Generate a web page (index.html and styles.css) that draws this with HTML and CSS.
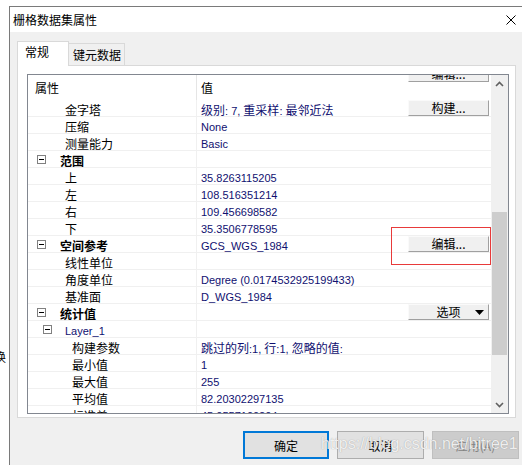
FILE: index.html
```html
<!DOCTYPE html>
<html>
<head>
<meta charset="utf-8">
<link rel="stylesheet" href="styles.css">
</head>
<body>
<div class="screen">
  <div class="behind"><span class="cut">换</span></div>
  <div class="dialog">
    <div class="titlebar">
      <span class="title">栅格数据集属性</span>
      <svg class="close" width="10" height="10" viewBox="0 0 10 10"><path d="M0.5 0.5 L9.5 9.5 M9.5 0.5 L0.5 9.5" stroke="#000" stroke-width="1" fill="none"/></svg>
    </div>
    <div class="body">
      <div class="tabs">
        <div class="tab active">常规</div>
        <div class="tab">键元数据</div>
      </div>
      <div class="panel">
        <div class="grid">
          <div class="rows">
            <div class="hdr"><div class="hc1">属性</div><div class="hc2">值</div></div>
            <div class="row"><div class="k l1">金字塔</div><div class="v"><span class="t"><span class="zh">级别</span>: 7, <span class="zh">重采样</span>: <span class="zh">最邻近法</span></span><span class="btn">构建...</span></div></div>
            <div class="row"><div class="k l1">压缩</div><div class="v"><span class="t">None</span></div></div>
            <div class="row"><div class="k l1">测量能力</div><div class="v"><span class="t">Basic</span></div></div>
            <div class="row"><div class="k cat"><span class="mb"></span>范围</div><div class="v"></div></div>
            <div class="row"><div class="k l1">上</div><div class="v"><span class="t">35.8263115205</span></div></div>
            <div class="row"><div class="k l1">左</div><div class="v"><span class="t">108.516351214</span></div></div>
            <div class="row"><div class="k l1">右</div><div class="v"><span class="t">109.456698582</span></div></div>
            <div class="row"><div class="k l1">下</div><div class="v"><span class="t">35.3506778595</span></div></div>
            <div class="row"><div class="k cat"><span class="mb"></span>空间参考</div><div class="v"><span class="t">GCS_WGS_1984</span><span class="btn">编辑...</span></div></div>
            <div class="row"><div class="k l1">线性单位</div><div class="v"></div></div>
            <div class="row"><div class="k l1">角度单位</div><div class="v"><span class="t">Degree (0.0174532925199433)</span></div></div>
            <div class="row"><div class="k l1">基准面</div><div class="v"><span class="t">D_WGS_1984</span></div></div>
            <div class="row"><div class="k cat"><span class="mb"></span>统计值</div><div class="v"><span class="btn dd"><span></span><span>选项</span><svg width="9" height="5" viewBox="0 0 9 5"><path d="M0 0 H9 L4.5 5 Z" fill="#000"/></svg></span></div></div>
            <div class="row"><div class="k sub"><span class="mb"></span><span class="lay">Layer_1</span></div><div class="v"></div></div>
            <div class="row"><div class="k l2">构建参数</div><div class="v"><span class="t"><span class="zh">跳过的列</span>:1, <span class="zh">行</span>:1, <span class="zh">忽略的值</span>:</span></div></div>
            <div class="row"><div class="k l2">最小值</div><div class="v"><span class="t">1</span></div></div>
            <div class="row"><div class="k l2">最大值</div><div class="v"><span class="t">255</span></div></div>
            <div class="row"><div class="k l2">平均值</div><div class="v"><span class="t">82.20302297135</span></div></div>
            <div class="row"><div class="k l2">标准差</div><div class="v"><span class="t">45.0557100204</span></div></div>
          </div>
          <div class="sb">
            <div class="arrow"><svg width="9" height="6" viewBox="0 0 9 6"><path d="M1 5 L4.5 1.5 L8 5" stroke="#606060" stroke-width="1.6" fill="none"/></svg></div>
            <div class="track"><div class="thumb"></div></div>
            <div class="arrow"><svg width="9" height="6" viewBox="0 0 9 6"><path d="M1 1 L4.5 4.5 L8 1" stroke="#606060" stroke-width="1.6" fill="none"/></svg></div>
          </div>
          <div class="clip"><span class="btn clipped">编辑...</span></div>
        </div>
      </div>
      <div class="actions">
        <div class="pb ok">确定</div>
        <div class="pb">取消</div>
        <div class="pb off">应用(A)</div>
      </div>
    </div>
  </div>
</div>
<div class="redbox"></div>
<div class="wm">https://blog.csdn.net/bitree1</div>
</body>
</html>
```

FILE: styles.css
```css
body {
  margin: 0;
  width: 522px;
  height: 465px;
  overflow: hidden;
  background: #fff;
  position: relative;
  font-family: "Noto Sans CJK SC", sans-serif;
  font-size: 12px;
  color: #000;
}
.screen {
  display: flex;
  padding-top: 6px;
  height: 465px;
  box-sizing: border-box;
}
.behind {
  width: 9px;
  overflow: hidden;
  padding-top: 343px;
}
.cut {
  display: block;
  margin-left: -6px;
  line-height: 16px;
}
.dialog {
  flex: 1;
  border-top: 1px solid #7a7a7a;
  border-left: 1px solid #7a7a7a;
  background: #f0f0f0;
  display: flex;
  flex-direction: column;
}
.titlebar {
  height: 25px;
  background: #fff;
  display: flex;
  align-items: center;
  padding-left: 3px;
}
.title { line-height: 16px; }
.close {
  margin-left: auto;
  margin-right: 6px;
}
.body {
  padding: 9px 0 0 7px;
}
.tabs {
  display: flex;
  align-items: flex-end;
  height: 24px;
}
.tab {
  box-sizing: border-box;
  border: 1px solid #d9d9d9;
  border-bottom: none;
  line-height: 16px;
}
.tab.active {
  width: 52px;
  height: 25px;
  background: #fff;
  margin-bottom: -1px;
  position: relative;
  z-index: 1;
  padding: 2px 0 0 7px;
}
.tab:not(.active) {
  width: 56px;
  height: 22px;
  border-left: none;
  padding: 3px 0 0 4px;
}
.panel {
  width: 499px;
  height: 353px;
  box-sizing: border-box;
  border: 1px solid #d9d9d9;
  background: #fff;
  padding: 8px 0 0 9px;
}
.grid {
  width: 482px;
  height: 340px;
  box-sizing: border-box;
  border: 1px solid #828790;
  display: flex;
  position: relative;
}
.rows {
  width: 463px;
  overflow: hidden;
}
.hdr {
  height: 25px;
  display: flex;
  line-height: 25px;
}
.hc1 {
  width: 169px;
  box-sizing: border-box;
  border-right: 1px solid #e5e5e5;
  padding-left: 7px;
}
.hc2 { padding-left: 4px; }
.row {
  height: 17px;
  box-sizing: border-box;
  border-bottom: 1px solid #f0f0f0;
  display: flex;
}
.k {
  width: 169px;
  flex: none;
  box-sizing: border-box;
  border-right: 1px solid #f0f0f0;
  padding-top: 2px;
  line-height: 16px;
  white-space: nowrap;
  display: flex;
  align-items: flex-start;
}
.l1 { padding-left: 37px; }
.l2 { padding-left: 44px; }
.cat { padding-left: 9px; font-weight: bold; }
.cat .mb { margin-right: 14px; }
.sub { padding-left: 15px; }
.sub .mb { margin-right: 13px; }
.mb {
  width: 9px;
  height: 9px;
  box-sizing: border-box;
  border: 1px solid #808080;
  margin-top: 2px;
  position: relative;
  flex: none;
  background: #fff;
}
.mb::after {
  content: "";
  position: absolute;
  left: 1px;
  top: 3px;
  width: 5px;
  height: 1px;
  background: #000;
}
.lay {
  font-family: "Liberation Sans", sans-serif;
  font-size: 11px;
  color: #101070;
  font-weight: normal;
}
.v {
  flex: 1;
  min-width: 0;
  display: flex;
  justify-content: space-between;
  align-items: flex-start;
  padding-left: 4px;
  font-family: "Liberation Sans", "Noto Sans CJK SC", sans-serif;
  font-size: 11px;
  color: #101070;
  white-space: nowrap;
}
.t {
  padding-top: 2px;
  line-height: 16px;
}
.zh {
  font-family: "Noto Sans CJK SC", sans-serif;
  font-size: 12px;
}
.btn {
  width: 81px;
  height: 16px;
  margin-left: auto;
  margin-right: 2px;
  box-sizing: border-box;
  background: #f0f0f0;
  border-top: 1px solid #fafafa;
  border-left: 1px solid #fafafa;
  border-right: 1px solid #a0a0a0;
  border-bottom: 1px solid #a0a0a0;
  font-family: "Noto Sans CJK SC", sans-serif;
  font-size: 12px;
  color: #000;
  line-height: 14px;
  text-align: center;
  flex: none;
}
.dd {
  display: grid;
  grid-template-columns: 1fr auto 1fr;
  align-items: center;
}
.dd svg {
  justify-self: end;
  margin-right: 4px;
}
.sb {
  width: 17px;
  background: #f0f0f0;
  display: flex;
  flex-direction: column;
}
.arrow {
  height: 17px;
  display: flex;
  align-items: center;
  justify-content: center;
}
.track {
  flex: 1;
  padding-top: 120px;
}
.thumb {
  width: 15px;
  height: 143px;
  margin-left: 1px;
  background: #cdcdcd;
}
.clip {
  position: absolute;
  left: 380px;
  top: 0;
  width: 81px;
  height: 7px;
  overflow: hidden;
}
.clipped {
  display: block;
  margin: -9px 0 0 0;
}
.actions {
  display: flex;
  justify-content: flex-end;
  gap: 8px;
  margin-top: 13px;
  padding-right: 3px;
}
.pb {
  width: 87px;
  height: 28px;
  box-sizing: border-box;
  background: #e1e1e1;
  border: 1px solid #adadad;
  display: flex;
  align-items: center;
  justify-content: center;
}
.pb.ok {
  width: 86px;
  border: 2px solid #0078d7;
}
.pb.off {
  background: #cccccc;
  border-color: #bfbfbf;
  color: #838383;
}
.redbox {
  position: absolute;
  left: 391px;
  top: 227px;
  width: 100px;
  height: 38px;
  box-sizing: border-box;
  border: 1px solid #e83a3a;
}
.wm {
  position: absolute;
  left: 321px;
  top: 435px;
  font-family: "Liberation Sans", sans-serif;
  font-size: 16px;
  line-height: 18px;
  color: rgba(255, 255, 255, 0.85);
  text-shadow: 0 0 1px rgba(90, 90, 90, 0.55);
  white-space: nowrap;
}
```
